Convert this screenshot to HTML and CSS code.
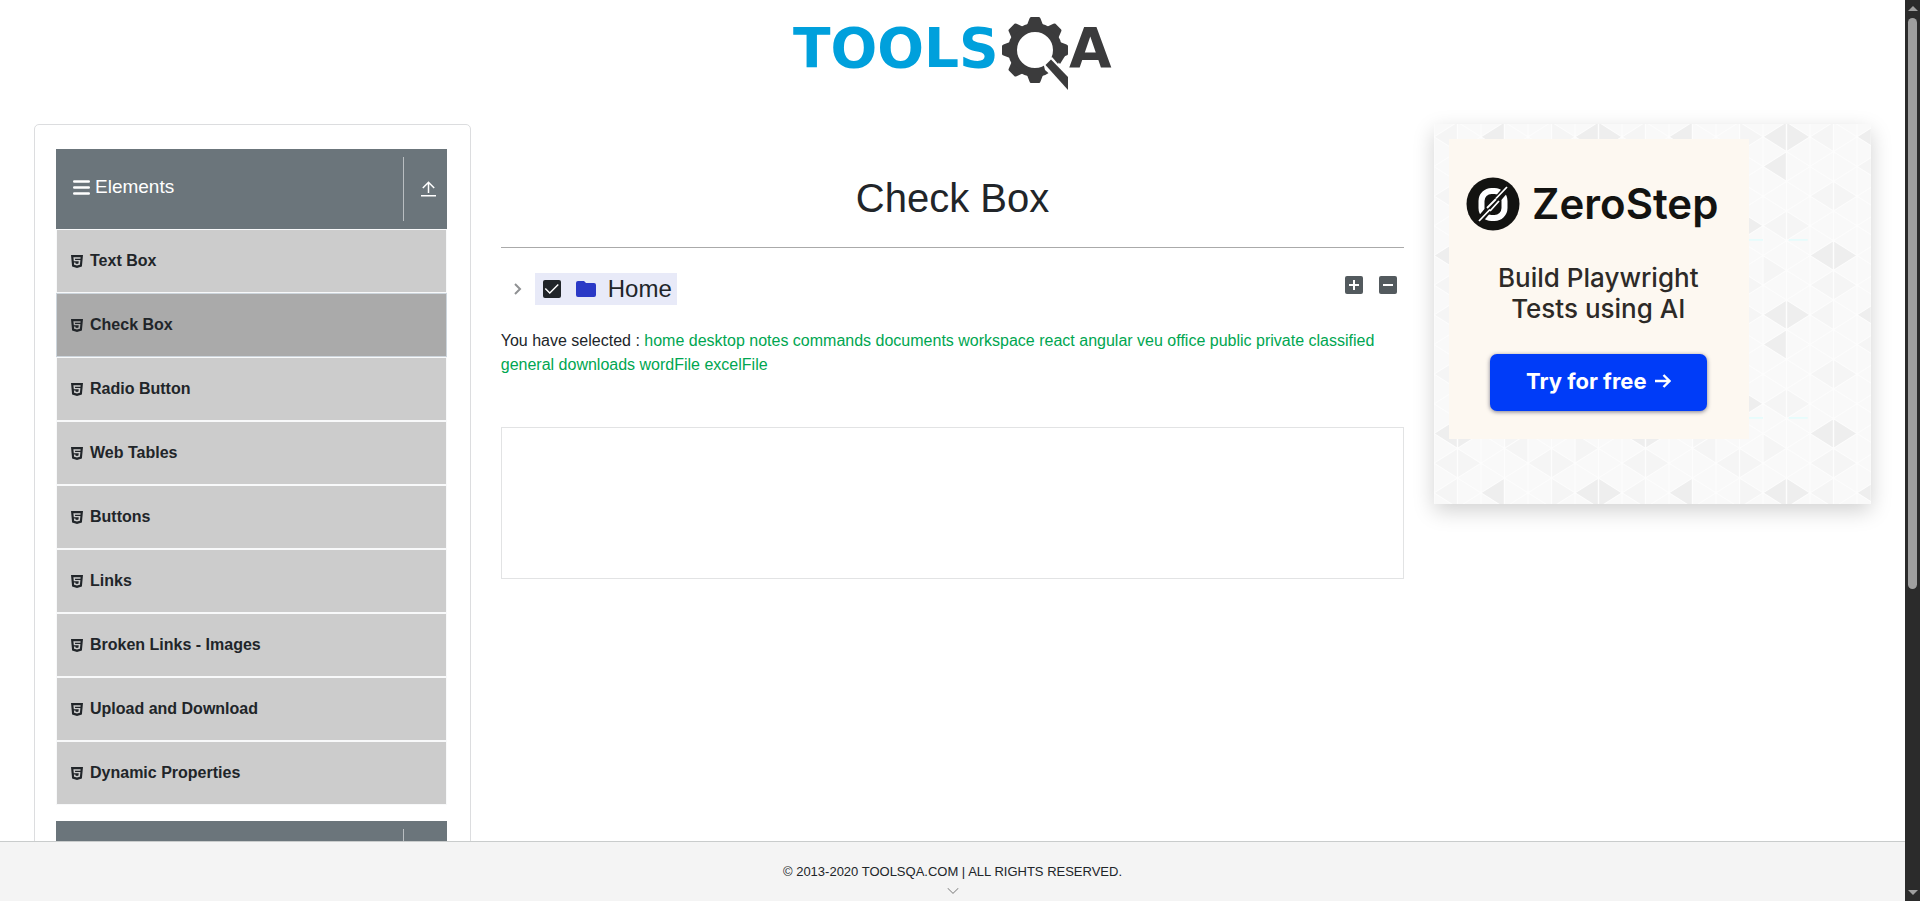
FILE: index.html
```html
<!DOCTYPE html>
<html lang="en">
<head>
<meta charset="utf-8">
<title>ToolsQA</title>
<link rel="stylesheet" href="styles.css">
</head>
<body>
<svg class="sprite" aria-hidden="true">
  <symbol id="html5" viewBox="0 0 12 13">
    <path fill="currentColor" fill-rule="evenodd" d="M0 0h12l-1.100 11.400L6 13 1.100 11.400zM2.400 2.300l.4 4h4.900l-.2 2.200-1.500.5-1.500-.5-.1-1H2.900l.2 2.200 2.900.9 2.900-.9.500-4.700H4.100L4 3.700h5.500l.1-1.400z"/>
  </symbol>
  <symbol id="bars" viewBox="0 0 17 15">
    <path stroke="currentColor" stroke-width="2.400" stroke-linecap="round" d="M1.200 1.500h14.600M1.200 7.500h14.600M1.200 13.500h14.600"/>
  </symbol>
  <symbol id="up" viewBox="0 0 15 16">
    <path stroke="currentColor" stroke-width="1.500" fill="none" d="M7.500 1.500V12M1.800 7l5.700-5.700L13.200 7M0 14.700h15"/>
  </symbol>
</svg>
<div class="window">
  <div class="page">
    <header class="top">
      <a href="#" aria-label="ToolsQA home">
        <svg class="logo" width="350" height="100" viewBox="-3 0 350 100">
          <text class="word blue" x="12" y="67">TOOLS</text>
          <g class="dark" transform="translate(254 50)">
            <circle r="22.500" fill="none" stroke="currentColor" stroke-width="9"/>
            <g fill="currentColor">
              <path id="tooth" d="M-8-25-5.500-31.500Q-5-33-4-33H4Q5-33 5.500-31.500L8-25z"/>
              <use href="#tooth" transform="rotate(45)"/>
              <use href="#tooth" transform="rotate(90)"/>
              <use href="#tooth" transform="rotate(180)"/>
              <use href="#tooth" transform="rotate(225)"/>
              <use href="#tooth" transform="rotate(270)"/>
              <use href="#tooth" transform="rotate(315)"/>
            </g>
            <path fill="#fff" d="M8 12 17 7 30 22V38L10 20z"/>
            <path fill="currentColor" d="M16 9.500 33 27V40L10.500 15z"/>
            <path fill="currentColor" d="M18.500 6 30 6 25 14z"/>
          </g>
          <text class="word dark" x="288" y="67">A</text>
        </svg>
      </a>
    </header>
    <div class="columns">
      <nav class="side">
        <section>
          <button class="group" type="button">
            <span class="group-name"><svg width="17" height="15"><use href="#bars"/></svg>Elements</span>
            <span class="group-icon"><svg width="15" height="16"><use href="#up"/></svg></span>
          </button>
          <ul class="items">
            <li><a href="#"><svg width="12" height="13"><use href="#html5"/></svg>Text Box</a></li>
            <li><a class="active" href="#"><svg width="12" height="13"><use href="#html5"/></svg>Check Box</a></li>
            <li><a href="#"><svg width="12" height="13"><use href="#html5"/></svg>Radio Button</a></li>
            <li><a href="#"><svg width="12" height="13"><use href="#html5"/></svg>Web Tables</a></li>
            <li><a href="#"><svg width="12" height="13"><use href="#html5"/></svg>Buttons</a></li>
            <li><a href="#"><svg width="12" height="13"><use href="#html5"/></svg>Links</a></li>
            <li><a href="#"><svg width="12" height="13"><use href="#html5"/></svg>Broken Links - Images</a></li>
            <li><a href="#"><svg width="12" height="13"><use href="#html5"/></svg>Upload and Download</a></li>
            <li><a href="#"><svg width="12" height="13"><use href="#html5"/></svg>Dynamic Properties</a></li>
          </ul>
        </section>
        <section>
          <button class="group" type="button" aria-label="Next group">
            <span class="group-name"></span>
            <span class="group-icon"></span>
          </button>
        </section>
      </nav>
      <main class="main">
        <h1>Check Box</h1>
        <hr>
        <div class="tree">
          <button class="toggle" type="button" aria-label="Toggle">
            <svg width="8" height="12" viewBox="0 0 8 12"><path d="M1 1l5 5-5 5" fill="none" stroke="#8f9193" stroke-width="2"/></svg>
          </button>
          <label class="node" for="home">
            <input id="home" type="checkbox" checked>
            <svg width="20" height="16" viewBox="0 0 20 16"><path fill="#2a39c6" d="M2 0h6l2 2h8q2 0 2 2v10q0 2-2 2H2q-2 0-2-2V2q0-2 2-2z"/></svg>
            <span>Home</span>
          </label>
          <div class="tools">
            <button type="button" aria-label="Expand all"><svg width="18" height="18" viewBox="0 0 18 18"><rect width="18" height="18" rx="2" fill="#535a5e"/><path d="M9 4v10M4 9h10" stroke="#fff" stroke-width="2"/></svg></button>
            <button type="button" aria-label="Collapse all"><svg width="18" height="18" viewBox="0 0 18 18"><rect width="18" height="18" rx="2" fill="#535a5e"/><path d="M4 9h10" stroke="#fff" stroke-width="2"/></svg></button>
          </div>
        </div>
        <p class="result"><span>You have selected :</span> <span class="picked">home</span> <span class="picked">desktop</span> <span class="picked">notes</span> <span class="picked">commands</span> <span class="picked">documents</span> <span class="picked">workspace</span> <span class="picked">react</span> <span class="picked">angular</span> <span class="picked">veu</span> <span class="picked">office</span> <span class="picked">public</span> <span class="picked">private</span> <span class="picked">classified</span> <span class="picked">general</span> <span class="picked">downloads</span> <span class="picked">wordFile</span> <span class="picked">excelFile</span></p>
        <div class="slot"></div>
      </main>
      <aside class="promo">
        <svg class="pattern" width="100%" height="100%" aria-hidden="true">
          <defs>
            <pattern id="tri" width="188" height="178" patternUnits="userSpaceOnUse" patternTransform="translate(0 -2)" viewBox="0 0 8 12" preserveAspectRatio="none">
              <rect width="8" height="12" fill="#f9f9f9"/>
              <path fill="#f5f5f5" d="M0 1 1 0 1 2zM4 3 5 2 5 4zM1 4 2 5 1 6 0 5zM3 8 4 9 3 10zM5 10 6 11 5 12 4 11zM1 10 2 11 1 12zM7 6 8 7 7 8 6 7zM4 5 5 6 4 7zM4 11 4 9 3 10zM6 9 7 10 6 11zM0 11 1 10 1 12zM5 0 6 1 5 2zM2 3 3 2 3 4z"/>
              <path fill="#eee" d="M7 0 8 1 7 2 6 1zM2 1 3 0 3 2zM6 3 7 2 7 4zM5 6 6 7 5 8zM0 9 1 8 2 9 1 10z"/>
              <path fill="none" stroke="#fdfdfd" stroke-width=".06" d="M0 0V12M1 0V12M2 0V12M3 0V12M4 0V12M5 0V12M6 0V12M7 0V12M8 0V12M0-7 8 1M0-5 8 3M0-3 8 5M0-1 8 7M0 1 8 9M0 3 8 11M0 5 8 13M0 7 8 15M0 9 8 17M0 11 8 19M0 1 8-7M0 3 8-5M0 5 8-3M0 7 8-1M0 9 8 1M0 11 8 3M0 13 8 5M0 15 8 7M0 17 8 9M0 19 8 11"/>
              <path stroke="#e6fcfc" stroke-width=".12" d="M5.400 7.950H6M7.100 7.950H7.900"/>
            </pattern>
          </defs>
          <rect width="100%" height="100%" fill="url(#tri)"/>
        </svg>
        <a class="ad" href="#">
          <span class="brand">
            <svg width="54" height="54" viewBox="0 0 54 54">
              <circle cx="27" cy="27" r="26.500" fill="#131311"/>
              <rect x="15.500" y="14" width="23" height="27" rx="10" fill="none" stroke="#fff" stroke-width="6"/>
              <path d="M12 45 41 11" stroke="#131311" stroke-width="7"/>
              <path d="M13 44 24 32.500M30 21.500 41 10M21 31l9-9M24 34l9-10" stroke="#fff" stroke-width="1.800"/>
            </svg>
            <span>ZeroStep</span>
          </span>
          <span class="pitch">Build Playwright<br>Tests using AI</span>
          <span class="cta">Try for free
            <svg width="16" height="14" viewBox="0 0 16 14"><path d="M0 7h14M8.500 1l6 6-6 6" fill="none" stroke="#fff" stroke-width="2.400"/></svg>
          </span>
        </a>
      </aside>
    </div>
    <footer class="foot">
      <span>© 2013-2020 TOOLSQA.COM | ALL RIGHTS RESERVED.</span>
      <svg width="12" height="6" viewBox="0 0 12 6"><path d="M.500 0 6 5.400 11.500 0" fill="none" stroke="#777"/></svg>
    </footer>
  </div>
  <div class="scroll" aria-hidden="true">
    <svg width="10" height="5" viewBox="0 0 10 5"><path fill="#9f9f9f" d="M5 0l5 5H0z"/></svg>
    <div class="track"><div class="thumb"></div></div>
    <svg width="10" height="5" viewBox="0 0 10 5"><path fill="#9f9f9f" d="M0 0h10L5 5z"/></svg>
  </div>
</div>
</body>
</html>
```

FILE: styles.css
```css
* { box-sizing: border-box; }
body {
  margin: 0;
  font: 16px/24px "Liberation Sans", Arial, sans-serif;
  color: #212529;
  background: #fff;
}
svg { display: block; flex: none; }
button { font: inherit; color: inherit; border: 0; padding: 0; background: none; }
a { color: inherit; text-decoration: none; }
.sprite { position: absolute; width: 0; height: 0; }

.window { display: grid; grid-template-columns: 1fr 15px; height: 100vh; overflow: hidden; }
.page { display: flex; flex-direction: column; min-width: 0; min-height: 0; }

.top { display: flex; justify-content: center; flex: none; margin-bottom: 24px; }
.word { font: bold 55px "DejaVu Sans", sans-serif; fill: currentColor; }
.blue { color: #00a0dc; }
.dark { color: #3b3b3c; }

.columns {
  flex: 1;
  min-height: 0;
  display: grid;
  grid-template-columns: repeat(12, 1fr);
  column-gap: 30px;
  align-items: start;
  padding: 0 34px;
}

.side {
  grid-column: span 3;
  border: 1px solid #dcdddf;
  border-radius: 5px;
  padding: 24px 23px 24px 21px;
}
.side section { margin-bottom: 16px; }
.group {
  display: flex;
  align-items: center;
  width: 100%;
  height: 80px;
  padding: 8px 0;
  background: #6b757b;
  color: #fff;
  text-align: left;
}
.group-name {
  flex: 1;
  display: flex;
  align-items: center;
  gap: 5px;
  padding: 0 0 4px 17px;
  font-size: 19px;
}
.group-icon {
  display: flex;
  align-items: center;
  width: 44px;
  height: 64px;
  padding-left: 17px;
  border-left: 1px solid #b9bec1;
}
.items { list-style: none; margin: 0; padding: 0; }
.items a {
  display: flex;
  align-items: center;
  gap: 7px;
  height: 64px;
  padding-left: 14px;
  border: 1px solid #f8f9fa;
  background: #ccc;
  font-weight: bold;
}
.items .active { background: #aaa; border-color: #cdd5dc; }

.main { grid-column: span 6; padding-top: 50px; }
h1 { margin: 0; font-size: 40px; line-height: 48px; font-weight: normal; text-align: center; }
hr { margin: 25px 0; border: 0; border-top: 1px solid #aaa; }
.tree { display: flex; align-items: center; padding-right: 7px; }
.toggle { width: 34px; padding-left: 13px; }
.node {
  display: flex;
  align-items: center;
  height: 32px;
  padding: 0 5px 0 8px;
  background: #e8eaf8;
  font-size: 24px;
}
.node input {
  appearance: none;
  width: 18px;
  height: 18px;
  margin: 0 15px 0 0;
  border-radius: 2px;
  background: #212529;
}
.node input:checked::before {
  content: "";
  display: block;
  width: 18px;
  height: 18px;
  background: #fff;
  clip-path: polygon(2px 9px, 3px 8px, 7px 12px, 15px 4px, 16px 5px, 7px 14px);
}
.node span { margin-left: 12px; }
.tools { display: flex; gap: 16px; margin-left: auto; padding-bottom: 8px; }
.result { margin: 24px 0 50px; }
.picked { color: #00a651; }
.slot { height: 152px; border: 1px solid #e2e3e4; }

.promo {
  grid-column: span 3;
  position: relative;
  height: 380px;
  padding: 15px;
  box-shadow: 0 7px 20px rgba(0, 0, 0, .18);
}
.pattern { position: absolute; inset: 0; }
.ad {
  position: relative;
  display: flex;
  flex-direction: column;
  align-items: center;
  width: 300px;
  height: 300px;
  padding: 38px 2px 0 0;
  background: #fdf8f1;
  font-family: Inter, sans-serif;
  color: #2d2a27;
}
.brand {
  display: flex;
  align-items: center;
  gap: 12px;
  height: 54px;
  padding-right: 12px;
  font-size: 42px;
  font-weight: 600;
  color: #131311;
}
.pitch { margin-top: 31px; font-size: 26px; line-height: 31px; font-weight: 500; text-align: center; }
.cta {
  display: flex;
  align-items: center;
  justify-content: center;
  gap: 8px;
  width: 217px;
  height: 57px;
  margin-top: 30px;
  padding-bottom: 3px;
  border-radius: 7px;
  background: #003cf8;
  box-shadow: 0 1px 4px rgba(0, 0, 40, .5);
  color: #fff;
  font-size: 22px;
  font-weight: 700;
}

.foot {
  position: relative;
  flex: none;
  display: flex;
  flex-direction: column;
  align-items: center;
  gap: 6px;
  padding: 20px 0 7px;
  border-top: 1px solid #c9cccc;
  background: #f4f4f4;
  font-size: 13px;
  line-height: 20px;
}

.scroll {
  display: flex;
  flex-direction: column;
  align-items: center;
  gap: 7px;
  padding: 6px 0;
  background: #2b2b2b;
}
.track { flex: 1; }
.thumb { width: 9px; height: 66%; border-radius: 5px; background: #9f9f9f; }
```
